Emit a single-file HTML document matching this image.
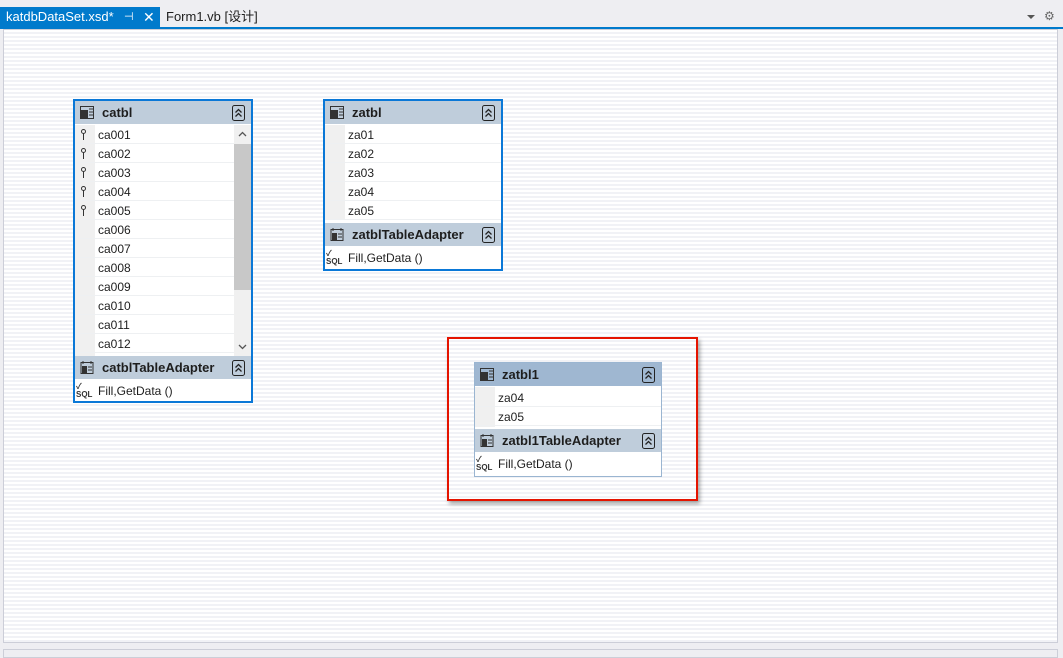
<!DOCTYPE html>
<html><head><meta charset="utf-8"><style>
*{margin:0;padding:0;box-sizing:border-box}
body{width:1063px;height:658px;overflow:hidden;background:#eeeef2;font-family:"Liberation Sans","Noto Sans CJK SC",sans-serif;position:relative;font-size:12px;color:#1e1e1e}
.a{position:absolute}
.canvas{left:3px;top:29px;width:1055px;height:614px;border:1px solid #ccced8;background:repeating-linear-gradient(#fff 0 2px,#f1f2f6 2px 4px)}
.box{position:absolute;background:#fff}
.hdr{position:absolute;left:0;right:0;height:23px;background:#bfcddb;font-weight:bold;font-size:13px;line-height:24px}
.hdr b{position:absolute;left:27px}
.hdr .ic{position:absolute;left:5px;top:5px;width:14px;height:13px}
.hdr .col{position:absolute;right:6px;top:4px;width:13px;height:16px}
.row{position:absolute;left:0;right:0;height:19px;line-height:21px;font-size:12px;border-bottom:1px solid #eef0f2}
.row span{position:absolute;left:23px}
.key{position:absolute;left:6px;top:4px;width:5px;height:5px;border:1.5px solid #333;border-radius:50%}
.key:after{content:"";position:absolute;left:0.5px;top:3px;width:1.5px;height:7px;background:#333}
.sql{position:absolute;left:1px;top:2px;font-size:8px;line-height:8px;font-weight:bold;color:#333}
</style></head><body>
<svg width="0" height="0" style="position:absolute"><defs><symbol id="cl" viewBox="0 0 13 16"><rect x="0.5" y="0.5" width="12" height="15" rx="2" fill="none" stroke="#222"/><path d="M3.5 7.5l3-3 3 3M3.5 11.5l3-3 3 3" fill="none" stroke="#222" stroke-width="1.3"/></symbol></defs></svg>
<div class="a" style="left:0;top:0;width:1063px;height:27px;background:#eeeef2"></div>
<div class="a" style="left:0;top:7px;width:160px;height:20px;background:#007acc;color:#fff;font-size:13px;line-height:20px;padding-left:6px">katdbDataSet.xsd*<span style="position:absolute;left:124px;font-size:11px">⊣</span><span style="position:absolute;left:143px;font-size:14px">✕</span></div>
<div class="a" style="left:166px;top:7px;font-size:13px;line-height:20px;color:#1e1e1e">Form1.vb [设计]</div>
<div class="a" style="left:1027px;top:15px;width:0;height:0;border-left:4px solid transparent;border-right:4px solid transparent;border-top:4px solid #555"></div>
<div class="a" style="left:1044px;top:9px;font-size:12px;color:#666">⚙</div>
<div class="a" style="left:0;top:27px;width:1063px;height:2px;background:#007acc"></div>
<div class="a canvas"></div>
<div class="a" style="left:3px;top:649px;width:1055px;height:9px;border:1px solid #ccced8;background:#eeeef2"></div>

<!-- catbl -->
<div class="box" style="left:73px;top:99px;width:180px;height:304px;border:2px solid #0a78d7">
 <div class="hdr" style="top:0"><svg class="ic" viewBox="0 0 14 13"><rect x="0.5" y="0.5" width="13" height="12" fill="none" stroke="#333"/><rect x="1" y="4" width="7" height="8" fill="#333"/><path d="M9 3h4M9 6h4M9 9h4" stroke="#333"/></svg><b>catbl</b><svg class="col"><use href="#cl"/></svg></div>
 <div class="a" style="left:0;top:24px;width:20px;height:231px;background:#f0f0f0"></div>
 <div class="a" style="left:159px;top:24px;width:17px;height:231px;background:#f0f0f0"><div class="a" style="left:0;top:19px;width:17px;height:146px;background:#c8c8c8"></div>
 <svg class="a" style="left:4px;top:6px" width="9" height="6"><path d="M1 5l3.5-3.5 3.5 3.5" fill="none" stroke="#555" stroke-width="1.3"/></svg>
 <svg class="a" style="left:4px;top:219px" width="9" height="6"><path d="M1 1l3.5 3.5 3.5-3.5" fill="none" stroke="#555" stroke-width="1.3"/></svg></div>
 <div class="row" style="top:24px;right:17px"><i class="key"></i><span>ca001</span></div>
 <div class="row" style="top:43px;right:17px"><i class="key"></i><span>ca002</span></div>
 <div class="row" style="top:62px;right:17px"><i class="key"></i><span>ca003</span></div>
 <div class="row" style="top:81px;right:17px"><i class="key"></i><span>ca004</span></div>
 <div class="row" style="top:100px;right:17px"><i class="key"></i><span>ca005</span></div>
 <div class="row" style="top:119px;right:17px"><span>ca006</span></div>
 <div class="row" style="top:138px;right:17px"><span>ca007</span></div>
 <div class="row" style="top:157px;right:17px"><span>ca008</span></div>
 <div class="row" style="top:176px;right:17px"><span>ca009</span></div>
 <div class="row" style="top:195px;right:17px"><span>ca010</span></div>
 <div class="row" style="top:214px;right:17px"><span>ca011</span></div>
 <div class="row" style="top:233px;right:17px"><span>ca012</span></div>
 <div class="hdr" style="top:255px"><svg class="ic" viewBox="0 0 14 13"><rect x="1" y="1.5" width="12" height="11" fill="none" stroke="#333"/><rect x="2" y="5" width="5" height="7" fill="#333"/><path d="M8 6h4M8 9h4M3 0v3M11 0v3" stroke="#333"/></svg><b>catblTableAdapter</b><svg class="col"><use href="#cl"/></svg></div>
 <div class="row" style="top:280px;border:none"><div class="sql">✓<br>SQL</div><span>Fill,GetData ()</span></div>
</div>

<!-- zatbl -->
<div class="box" style="left:323px;top:99px;width:180px;height:172px;border:2px solid #0a78d7">
 <div class="hdr" style="top:0"><svg class="ic" viewBox="0 0 14 13"><rect x="0.5" y="0.5" width="13" height="12" fill="none" stroke="#333"/><rect x="1" y="4" width="7" height="8" fill="#333"/><path d="M9 3h4M9 6h4M9 9h4" stroke="#333"/></svg><b>zatbl</b><svg class="col"><use href="#cl"/></svg></div>
 <div class="a" style="left:0;top:24px;width:20px;height:95px;background:#f0f0f0"></div>
 <div class="row" style="top:24px"><span>za01</span></div>
 <div class="row" style="top:43px"><span>za02</span></div>
 <div class="row" style="top:62px"><span>za03</span></div>
 <div class="row" style="top:81px"><span>za04</span></div>
 <div class="row" style="top:100px"><span>za05</span></div>
 <div class="hdr" style="top:122px"><svg class="ic" viewBox="0 0 14 13"><rect x="1" y="1.5" width="12" height="11" fill="none" stroke="#333"/><rect x="2" y="5" width="5" height="7" fill="#333"/><path d="M8 6h4M8 9h4M3 0v3M11 0v3" stroke="#333"/></svg><b>zatblTableAdapter</b><svg class="col"><use href="#cl"/></svg></div>
 <div class="row" style="top:147px;border:none"><div class="sql">✓<br>SQL</div><span>Fill,GetData ()</span></div>
</div>

<!-- red box -->
<div class="a" style="left:447px;top:337px;width:251px;height:164px;border:2px solid #e51400;box-shadow:2px 3px 4px rgba(0,0,0,.35)"></div>

<!-- zatbl1 -->
<div class="box" style="left:474px;top:362px;width:188px;height:115px;border:1px solid #9ab5d1">
 <div class="hdr" style="top:0;background:#9fb7d1"><svg class="ic" viewBox="0 0 14 13"><rect x="0.5" y="0.5" width="13" height="12" fill="none" stroke="#333"/><rect x="1" y="4" width="7" height="8" fill="#333"/><path d="M9 3h4M9 6h4M9 9h4" stroke="#333"/></svg><b>zatbl1</b><svg class="col"><use href="#cl"/></svg></div>
 <div class="a" style="left:0;top:24px;width:20px;height:40px;background:#f0f0f0"></div>
 <div class="row" style="top:25px"><span>za04</span></div>
 <div class="row" style="top:44px"><span>za05</span></div>
 <div class="hdr" style="top:66px"><svg class="ic" viewBox="0 0 14 13"><rect x="1" y="1.5" width="12" height="11" fill="none" stroke="#333"/><rect x="2" y="5" width="5" height="7" fill="#333"/><path d="M8 6h4M8 9h4M3 0v3M11 0v3" stroke="#333"/></svg><b>zatbl1TableAdapter</b><svg class="col"><use href="#cl"/></svg></div>
 <div class="row" style="top:91px;border:none"><div class="sql">✓<br>SQL</div><span>Fill,GetData ()</span></div>
</div>
</body></html>
